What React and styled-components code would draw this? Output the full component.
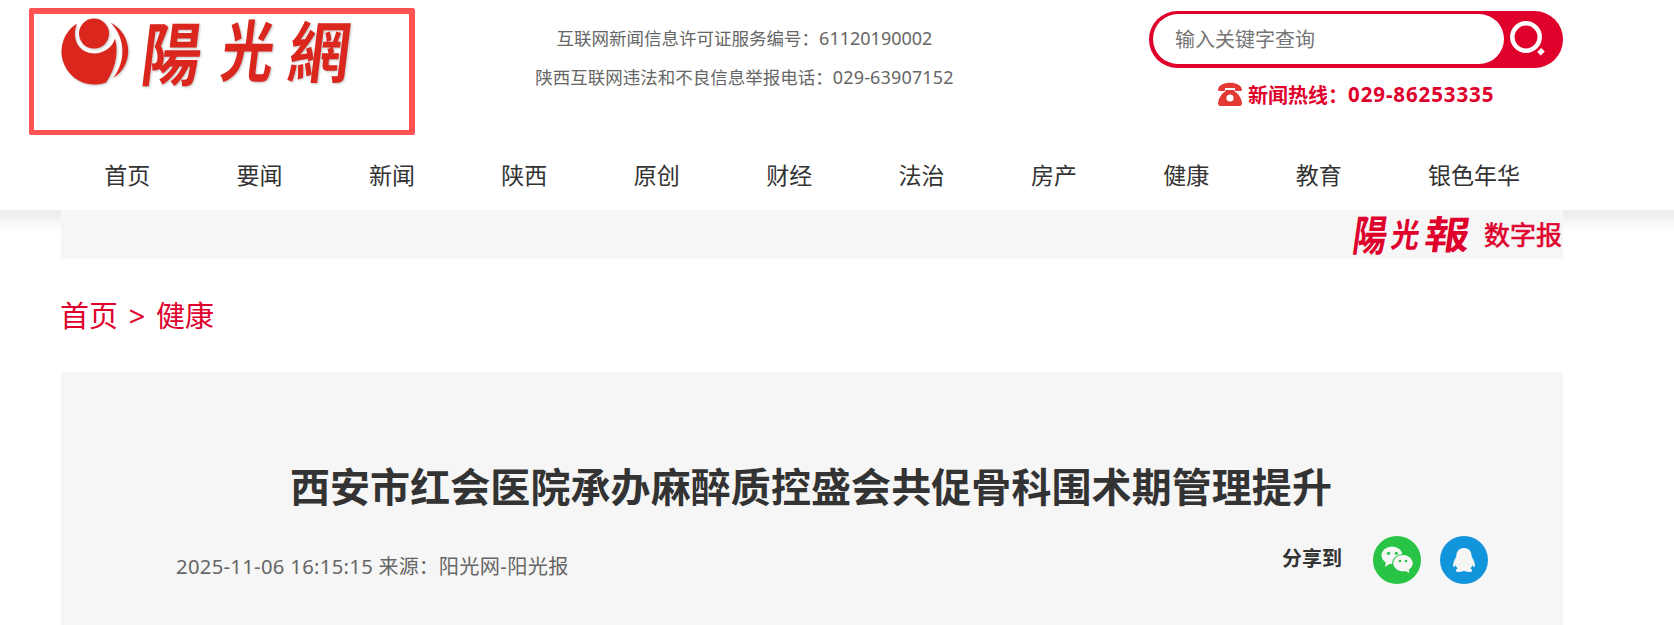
import React from 'react';
import styled, { createGlobalStyle } from 'styled-components';

const Global = createGlobalStyle`
  * { box-sizing: border-box; }
  body { margin: 0; background: #fff; overflow: hidden;
    font-family: "Noto Sans", "Noto Sans CJK SC", sans-serif; color: #333; }
`;
const Page = styled.div`height: 625px; overflow: hidden;`;
const Header = styled.header`height: 210px; background: #fff;`;
const Container = styled.div`position: relative; width: 1502px; margin-left: 61px;`;
const Top = styled(Container)`display: flex; height: 142px;`;
const Frame = styled.div`position: absolute; left: -32px; top: 8px; width: 386px; height: 127px; border: 5px solid #ff5353; border-top-width: 6px; border-right-width: 6px; border-radius: 2px;`;
const Logo = styled.svg`display: block; width: 300px; height: 100px; flex: none; overflow: visible; filter: drop-shadow(1px 1px 1px rgba(0,0,0,.25));`;
const Info = styled.div`width: 764px; padding: 18.5px 0 0 3px; text-align: center;`;
const InfoLine = styled.p`margin: 0; height: 39px; line-height: 39px; font-size: 17.5px; color: #666; white-space: nowrap;`;
const Num = styled.span`font-size: ${p => p.$size}px; letter-spacing: ${p => p.$gap || 0}px;`;
const Side = styled.div`width: 414px; margin-left: auto; padding-top: 11px;`;
const Search = styled.div`display: flex; height: 57px; border-radius: 29px; background: #df002c; padding: 3px 0 4px 4px;`;
const Field = styled.div`width: 351px; height: 50px; border-radius: 25px; background: #fff; color: #757575; font-size: 20px; line-height: 52px; padding-left: 22px;`;
const SearchIcon = styled.svg`width: 40px; height: 40px; margin: 5px 0 0 4px;`;
const Hotline = styled.div`display: flex; align-items: center; height: 30px; margin: 11px 0 0 69px; color: #df002c; font-size: 20px; font-weight: 700; white-space: nowrap;`;
const Phone = styled.svg`width: 24px; height: 24px; margin-right: 6px;`;
const Nav = styled.nav`display: flex; width: 1502px; margin-left: 61px; height: 68px;`;
const NavItem = styled.a`width: ${p => p.$wide ? 178 : 132.4}px; text-align: center; font-size: 23px; line-height: 66px; color: #333; white-space: nowrap;`;
const Band = styled.div`background: linear-gradient(#ececec 0, #efefef 6px, #f8f8f8 13px, #fdfdfd 20px, #fff 27px);`;
const Strip = styled(Container)`display: flex; justify-content: flex-end; height: 49px; background: #f6f6f6;`;
const Paper = styled.svg`width: 214px; height: 49px; overflow: visible;`;
const Brush = styled.g`font-family: "Noto Sans CJK TC", sans-serif; font-weight: 700; font-size: ${p => p.$size}px;`;
const Crumbs = styled(Container)`height: 113px; padding-top: 37px; color: #df002c; font-size: 29px; line-height: 40px; white-space: pre; word-spacing: 3.2px; text-indent: -1px;`;
const Article = styled(Container)`height: 253px; background: #f6f6f6; padding-top: 85px;`;
const Title = styled.h1`margin: 0 0 0 -2px; text-align: center; font-size: 40px; letter-spacing: .08px; line-height: 60px; white-space: nowrap;`;
const Meta = styled.div`display: flex; height: 60px; margin-top: 13px; padding: 0 75px 0 115px; align-items: center;`;
const Source = styled.div`padding-top: 11px; font-size: 20px; letter-spacing: .05px; color: #666; white-space: nowrap;`;
const Share = styled.div`display: flex; align-items: center; margin-left: auto; gap: 19px; font-size: 20px; font-weight: 700;`;
const ShareLabel = styled.span`margin: -5px 12px 0 0;`;
const Badge = styled.svg`width: 48px; height: 48px;`;

const items = ['首页', '要闻', '新闻', '陕西', '原创', '财经', '法治', '房产', '健康', '教育', '银色年华'];

const SunLogo = () => (
  <Logo viewBox="61 0 300 100" fill="#db261d">
    <circle cx="94" cy="33.6" r="15" />
    <path d="M77 23.5A33 33 0 0 0 94 84.5Q100 85 106 82.5C115 70 119 53 115 38.500A21.500 20 0 0 1 94 53.500C78 53.500 71 38 77 23.500Z" />
    <path d="M110.500 22.500C134 35 133.500 66 113 78C126 62 126 38 110.500 22.500Z" />
    <Brush $size={64}>
      <text transform="translate(139 80) skewX(-7) scale(.93 1.08)">陽</text>
      <text transform="translate(219 76) skewX(-7) scale(.82 1.04)">光</text>
      <text transform="translate(286 77) skewX(-7) scale(.96 1.04)">網</text>
    </Brush>
  </Logo>
);

const WeChat = () => (
  <Badge viewBox="0 0 48 48">
    <circle cx="24" cy="24" r="24" fill="#28c445" />
    <g fill="#f6f6f6">
      <ellipse cx="19" cy="19.3" rx="10.600" ry="8.700" />
      <path d="M13 25L12 31L18 27Z" />
      <ellipse cx="30" cy="27.300" rx="10.800" ry="9.200" fill="#28c445" />
      <ellipse cx="30" cy="27.300" rx="9.800" ry="8.200" />
      <path d="M31 34.500L36.500 37L35.500 32Z" />
    </g>
    <g fill="#28c445">
      <circle cx="15.500" cy="17.300" r="1.600" /><circle cx="23.300" cy="17.300" r="1.600" />
      <circle cx="27" cy="25" r="1.300" /><circle cx="33" cy="25" r="1.300" />
    </g>
  </Badge>
);

const QQ = () => (
  <Badge viewBox="0 0 48 48">
    <circle cx="24" cy="24" r="24" fill="#1296db" />
    <path fill="#f6f6f6" d="M24 12C18.500 12 16.200 16 16.300 21C14 24 12.800 27.500 13.200 30.500C13.500 32 15 30.500 15.800 29C16 30.500 16.800 31.600 17.800 32.500C15 33.500 15 36 18.500 36C21.500 36 22.800 35.500 24 34.800C25.200 35.500 26.500 36 29.500 36C33 36 33 33.500 30.200 32.500C31.200 31.600 32 30.500 32.200 29C33 30.500 34.500 32 34.800 30.500C35.200 27.500 34 24 31.700 21C31.800 16 29.500 12 24 12Z" />
  </Badge>
);

export default function App() {
  return <Page><Global />
    <Header>
      <Top>
        <SunLogo />
        <Frame />
        <Info>
          <InfoLine>互联网新闻信息许可证服务编号：<Num $size={18}>61120190002</Num></InfoLine>
          <InfoLine>陕西互联网违法和不良信息举报电话：<Num $size={18} $gap={.15}>029-63907152</Num></InfoLine>
        </Info>
        <Side>
          <Search>
            <Field>输入关键字查询</Field>
            <SearchIcon viewBox="0 0 40 40" fill="none" stroke="#fff"><circle cx="18" cy="18" r="13.700" strokeWidth="4.500" /><path d="M31 34.800l4-4" strokeWidth="5" /></SearchIcon>
          </Search>
          <Hotline>
            <Phone viewBox="0 0 24 24" fill="#e43932">
              <path d="M0 7.500C1-1.500 23-1.500 24 7.500Q24 9 22.500 9H18Q17 9 17 8V6H7V8Q7 9 6 9H1.500Q0 9 0 7.500Z" />
              <path d="M8 8H16Q17 10.500 19 11Q23 15 24 21Q24 24 21.500 24H2.500Q0 24 0 21Q1 15 5 11Q7 10.500 8 8Z" />
              <circle cx="12" cy="16" r="3.600" fill="#fff" />
            </Phone>
            新闻热线：<Num $size={20.5} $gap={.9}>029-86253335</Num>
          </Hotline>
        </Side>
      </Top>
      <Nav>{items.map(t => <NavItem key={t} $wide={t.length > 2}>{t}</NavItem>)}</Nav>
    </Header>
    <Band>
      <Strip>
        <Paper viewBox="0 0 214 49" fill="#df002c">
          <Brush $size={36}>
            <text transform="translate(2 41) skewX(-8) scale(.95 1.18)">陽</text>
            <text transform="translate(41 37) skewX(-8) scale(.78 .92)">光</text>
            <text transform="translate(74 39) skewX(-8) scale(1.25 1.08)">報</text>
          </Brush>
          <text x="135" y="35" fontSize="26" stroke="#df002c" strokeWidth=".6">数字报</text>
        </Paper>
      </Strip>
    </Band>
    <Crumbs>首页 &gt; 健康</Crumbs>
    <Article>
      <Title>西安市红会医院承办麻醉质控盛会共促骨科围术期管理提升</Title>
      <Meta>
        <Source><Num $size={20.2} $gap={.33}>2025-11-06 16:15:15 </Num>来源：<Num $size={20.2} $gap={.35}>阳光网-阳光报</Num></Source>
        <Share><ShareLabel>分享到</ShareLabel><WeChat /><QQ /></Share>
      </Meta>
    </Article>
  </Page>;
}
